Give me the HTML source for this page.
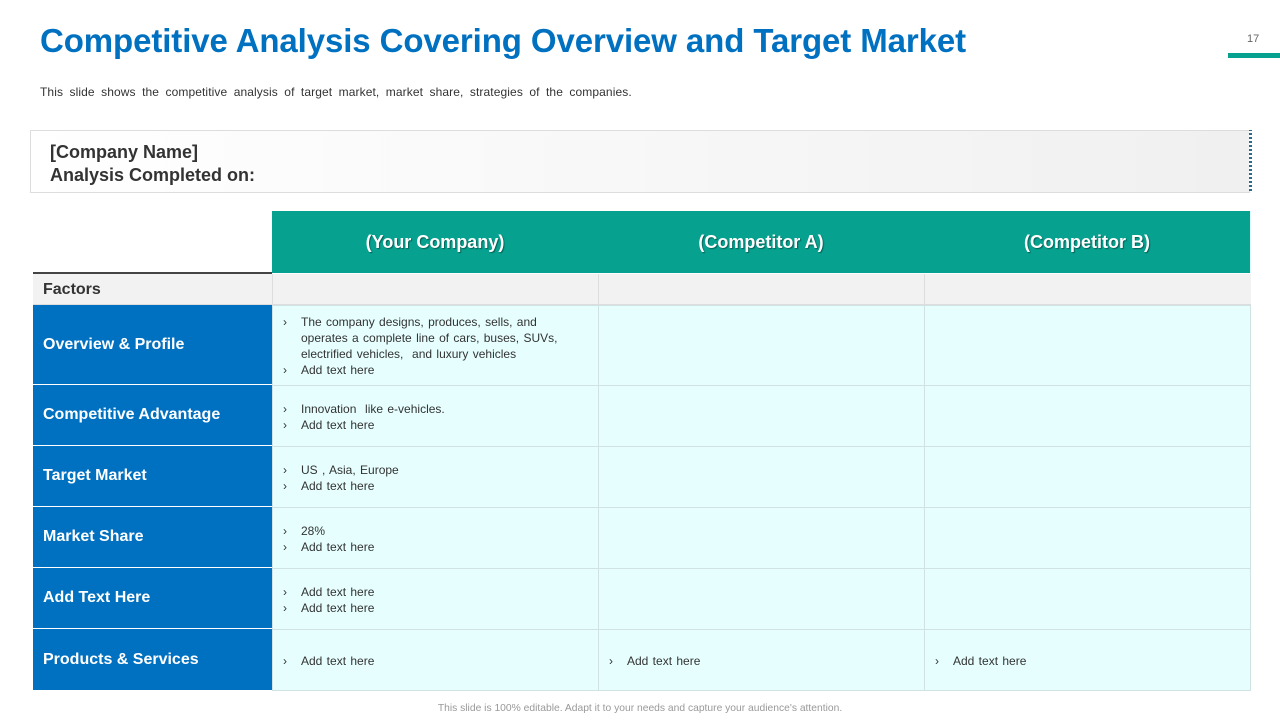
<!DOCTYPE html>
<html><head><style>
*{margin:0;padding:0;box-sizing:border-box}
body{width:1280px;height:720px;background:#fff;font-family:"Liberation Sans",sans-serif;position:relative;overflow:hidden}
.a{position:absolute}
h1{position:absolute;left:40px;top:22px;font-size:33px;color:#0070c0;font-weight:bold;letter-spacing:-0.1px;white-space:nowrap}
.hd{background:#07a18f;color:#fff;font-weight:bold;font-size:18px;display:flex;align-items:center;justify-content:center;text-shadow:1px 1px 1px rgba(0,0,0,.4);border-right:1px solid #dff}
.lab{background:#0070c0;color:#fff;font-weight:bold;font-size:16px;display:flex;align-items:center;padding-left:10px;border-bottom:1px solid #fff}
.c{background:#e6fefe;border:1px solid #d0e2e2;font-size:12px;color:#333;padding:8px 20px 0 10px;line-height:16px;word-spacing:1px}
.c div{padding-left:18px;position:relative}
.c div:before{content:"›";position:absolute;left:0}
</style></head><body>
<h1>Competitive Analysis Covering Overview and Target Market</h1>
<div class="a" style="left:1247px;top:33px;font-size:11px;color:#666">17</div>
<div class="a" style="left:1228px;top:53px;width:52px;height:5px;background:#07a18f"></div>
<div class="a" style="left:40px;top:85px;font-size:12px;color:#333;word-spacing:3px;letter-spacing:0.1px">This slide shows the competitive analysis of target market, market share, strategies of the companies.</div>
<div class="a" style="left:30px;top:130px;width:1220px;height:63px;border:1px solid #ddd;background:linear-gradient(90deg,#fff,#f0f0f0);padding:10px 0 0 19px;font-size:18px;font-weight:bold;color:#333;line-height:23px">[Company Name]<br>Analysis Completed on:</div>
<div class="a" style="left:1249px;top:130px;width:3px;height:61px;background:repeating-linear-gradient(0deg,#2a6a8a 0 2px,#fff 2px 4px)"></div>
<div class="a hd" style="left:272px;top:211px;width:327px;height:62px">(Your Company)</div>
<div class="a hd" style="left:598px;top:211px;width:327px;height:62px">(Competitor A)</div>
<div class="a hd" style="left:924px;top:211px;width:327px;height:62px">(Competitor B)</div>
<div class="a" style="left:33px;top:272px;width:239px;height:2px;background:#444"></div>
<div class="a" style="left:33px;top:274px;width:1218px;height:31px;background:#f2f2f2;border-bottom:1px solid #ddd"></div>
<div class="a" style="left:272px;top:274px;width:1px;height:31px;background:#ddd"></div>
<div class="a" style="left:598px;top:274px;width:1px;height:31px;background:#ddd"></div>
<div class="a" style="left:924px;top:274px;width:1px;height:31px;background:#ddd"></div>
<div class="a" style="left:43px;top:281px;font-size:16px;font-weight:bold;color:#333">Factors</div>

<div class="a lab" style="left:33px;top:305px;width:239px;height:80px">Overview &amp; Profile</div>
<div class="a lab" style="left:33px;top:385px;width:239px;height:61px">Competitive Advantage</div>
<div class="a lab" style="left:33px;top:446px;width:239px;height:61px">Target Market</div>
<div class="a lab" style="left:33px;top:507px;width:239px;height:61px">Market Share</div>
<div class="a lab" style="left:33px;top:568px;width:239px;height:61px">Add Text Here</div>
<div class="a lab" style="left:33px;top:629px;width:239px;height:62px">Products &amp; Services</div>

<div class="a c" style="left:272px;top:305px;width:327px;height:81px;padding-right:30px"><div>The company designs, produces, sells, and operates a complete line of cars, buses, SUVs, electrified vehicles, &nbsp;and luxury vehicles</div><div>Add text here</div></div>
<div class="a c" style="left:598px;top:305px;width:327px;height:81px"></div>
<div class="a c" style="left:924px;top:305px;width:327px;height:81px"></div>
<div class="a c" style="left:272px;top:385px;width:327px;height:62px;padding-top:15px"><div>Innovation &nbsp;like e-vehicles.</div><div>Add text here</div></div>
<div class="a c" style="left:598px;top:385px;width:327px;height:62px"></div>
<div class="a c" style="left:924px;top:385px;width:327px;height:62px"></div>
<div class="a c" style="left:272px;top:446px;width:327px;height:62px;padding-top:15px"><div>US , Asia, Europe</div><div>Add text here</div></div>
<div class="a c" style="left:598px;top:446px;width:327px;height:62px"></div>
<div class="a c" style="left:924px;top:446px;width:327px;height:62px"></div>
<div class="a c" style="left:272px;top:507px;width:327px;height:62px;padding-top:15px"><div>28%</div><div>Add text here</div></div>
<div class="a c" style="left:598px;top:507px;width:327px;height:62px"></div>
<div class="a c" style="left:924px;top:507px;width:327px;height:62px"></div>
<div class="a c" style="left:272px;top:568px;width:327px;height:62px;padding-top:15px"><div>Add text here</div><div>Add text here</div></div>
<div class="a c" style="left:598px;top:568px;width:327px;height:62px"></div>
<div class="a c" style="left:924px;top:568px;width:327px;height:62px"></div>
<div class="a c" style="left:272px;top:629px;width:327px;height:62px;padding-top:23px"><div>Add text here</div></div>
<div class="a c" style="left:598px;top:629px;width:327px;height:62px;padding-top:23px"><div>Add text here</div></div>
<div class="a c" style="left:924px;top:629px;width:327px;height:62px;padding-top:23px"><div>Add text here</div></div>

<div class="a" style="left:0;top:703px;width:1280px;text-align:center;font-size:10.3px;color:#999">This slide is 100% editable. Adapt it to your needs and capture your audience's attention.</div>
</body></html>
